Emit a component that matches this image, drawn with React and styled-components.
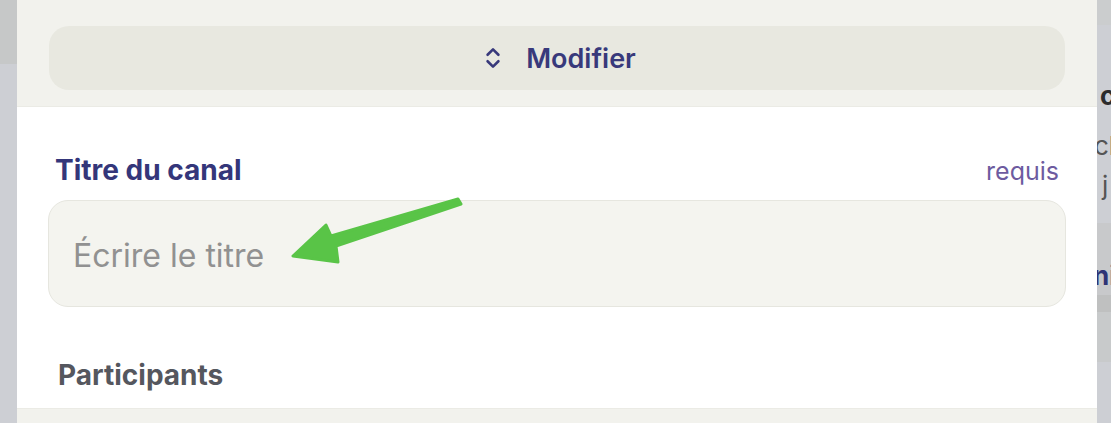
import styled, { createGlobalStyle } from "styled-components";
import { ChevronsUpDown } from "lucide-react";

const GlobalStyle = createGlobalStyle`
  html, body {
    margin: 0;
    padding: 0;
    background: #cdcfd4;
    font-family: "Inter", "Lato", "Liberation Sans", sans-serif;
    overflow: hidden;
  }
`;

const Page = styled.div`
  display: flex;
  width: 1111px;
  height: 423px;
  overflow: hidden;
`;

const SideStrip = styled.div`
  width: ${(p) => p.$width}px;
  flex-shrink: 0;
  display: flex;
  flex-direction: column;
  background: #cdcfd4;
  overflow: hidden;
`;

const StripBand = styled.div`
  height: ${(p) => p.$height}px;
  flex-shrink: 0;
  background: ${(p) => p.$bg};
`;

const PeekText = styled.div`
  white-space: nowrap;
  margin-left: ${(p) => p.$offset}px;
  font-size: 26px;
  line-height: 1;
  font-weight: ${(p) => (p.$bold ? 700 : 400)};
  color: ${(p) => p.$color};
  padding-top: ${(p) => p.$top}px;
`;

const Panel = styled.div`
  position: relative;
  flex: 1;
  display: flex;
  flex-direction: column;
  background: #ffffff;
`;

const Header = styled.div`
  background: #f2f2ed;
  padding: 26px 32px 16px;
  border-bottom: 1px solid #ebebe5;
`;

const ModifyButton = styled.button`
  width: 100%;
  height: 64px;
  border: none;
  border-radius: 20px;
  background: #e8e8e0;
  display: flex;
  align-items: center;
  justify-content: center;
  gap: 20px;
  color: #38397b;
  font-family: inherit;
  font-size: 27px;
  font-weight: 600;
  padding: 0 0 0 2px;
`;

const Body = styled.div`
  flex: 1;
  padding: 46px 31px 0;
`;

const LabelRow = styled.div`
  display: flex;
  justify-content: space-between;
  align-items: baseline;
  padding: 0 7px 0 7px;
  margin-bottom: 13px;
`;

const Label = styled.div`
  font-size: 28px;
  font-weight: 700;
  color: ${(p) => p.$color};
`;

const Hint = styled.div`
  font-size: 25px;
  color: #6d5ba0;
`;

const TitleInput = styled.input`
  box-sizing: border-box;
  width: 100%;
  height: 107px;
  border: 1px solid #e6e6df;
  border-radius: 20px;
  background: #f4f4ef;
  padding: 4px 24px 0;
  font-family: inherit;
  font-size: 32px;
  color: #333;
  outline: none;

  &::placeholder {
    color: #919191;
  }
`;

const Section = styled.div`
  padding: 51px 10px 0;
`;

const Footer = styled.div`
  height: 14px;
  background: #f2f2ed;
  border-top: 1px solid #ebebe5;
`;

const Arrow = styled.svg`
  position: absolute;
  left: 270px;
  top: 190px;
  width: 180px;
  height: 80px;
  overflow: visible;
`;

export default function App() {
  return (
    <>
      <GlobalStyle />
      <Page>
        <SideStrip $width={17}>
          <StripBand $height={64} $bg="#c6c8c8" />
        </SideStrip>
        <Panel>
          <Header>
            <ModifyButton>
              <ChevronsUpDown size={26} strokeWidth={2.4} />
              Modifier
            </ModifyButton>
          </Header>
          <Body>
            <LabelRow>
              <Label $color="#34367a">Titre du canal</Label>
              <Hint>requis</Hint>
            </LabelRow>
            <TitleInput placeholder="Écrire le titre" />
            <Section>
              <Label $color="#55575e">Participants</Label>
            </Section>
          </Body>
          <Footer />
          <Arrow viewBox="0 0 180 80">
            <path
              d="M171 9 L44 46 L39 35 L6 66 L51 72 L49 56 L174 14 Z"
              fill="#59c447"
              stroke="#59c447"
              strokeWidth="3"
              strokeLinejoin="round"
            />
          </Arrow>
        </Panel>
        <SideStrip $width={14}>
          <StripBand $height={25} $bg="#cbcdce" />
          <PeekText $offset={3} $top={58} $bold $color="#2c2c2c">c</PeekText>
          <PeekText $offset={-3} $top={24} $color="#555">ch</PeekText>
          <PeekText $offset={5} $top={14} $color="#555">j</PeekText>
          <StripBand $height={72} $bg="#c8c9cb" style={{ marginTop: 24 }}>
            <PeekText $offset={-4} $top={40} $bold $color="#2f3476">ni</PeekText>
          </StripBand>
          <StripBand $height={17} $bg="#bfc0c0" />
          <StripBand $height={50} $bg="#c8cacb" />
        </SideStrip>
      </Page>
    </>
  );
}
